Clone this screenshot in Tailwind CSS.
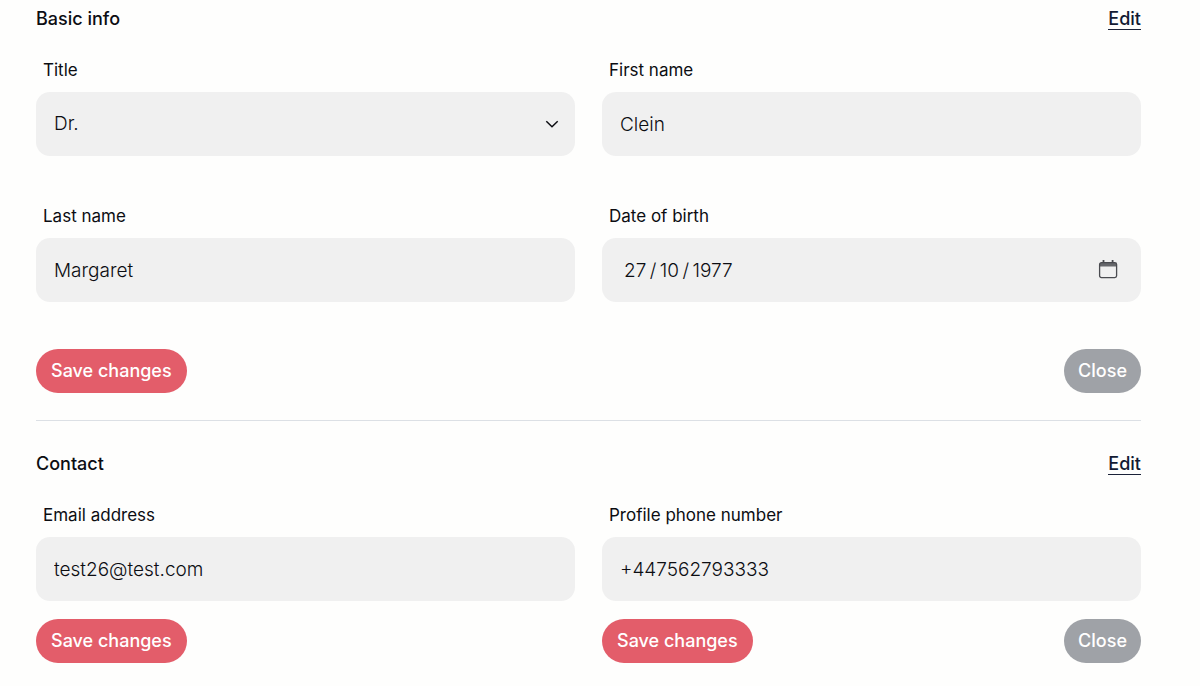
<!DOCTYPE html>
<html lang="en-GB">
<head>
<meta charset="utf-8">
<meta name="viewport" content="width=device-width, initial-scale=1">
<title>Profile</title>
<script src="https://cdn.jsdelivr.net/npm/@tailwindcss/browser@4"></script>
</head>
<body class="bg-[#fefefd] font-['Inter',sans-serif] text-[#0c0d12]">
<main class="pt-[5px] pb-5 pl-9 pr-[59px]">
  <section>
    <div class="flex items-center justify-between text-lg font-medium">
      <h2>Basic info</h2>
      <a href="#" class="border-b border-[#1b2238] leading-5 text-[#111a33]">Edit</a>
    </div>
    <form>
      <div class="mt-[25px] grid grid-cols-2 gap-x-[27px] gap-y-12">
        <div>
          <label for="title" class="block pl-[7px] text-[17px] leading-6">Title</label>
          <div class="relative mt-2.5">
            <select id="title" class="block h-16 w-full appearance-none rounded-[14px] bg-[#f0f0f0] px-[18px] text-[19px] font-light"><option>Dr.</option></select>
            <svg class="pointer-events-none absolute right-[16px] top-[25px] size-[14px]" viewBox="0 0 14 14" fill="none" stroke="currentColor" stroke-width="1.5"><path d="M1.3 4.2 7 9.8l5.7-5.6"/></svg>
          </div>
        </div>
        <div>
          <label for="first" class="block pl-[7px] text-[17px] leading-6">First name</label>
          <input id="first" type="text" value="Clein" class="mt-2.5 block h-16 w-full rounded-[14px] bg-[#f0f0f0] px-[18px] text-[19px] font-light">
        </div>
        <div>
          <label for="last" class="block pl-[7px] text-[17px] leading-6">Last name</label>
          <input id="last" type="text" value="Margaret" class="mt-2.5 block h-16 w-full rounded-[14px] bg-[#f0f0f0] px-[18px] text-[19px] font-light">
        </div>
        <div>
          <label for="dob" class="block pl-[7px] text-[17px] leading-6">Date of birth</label>
          <div class="relative mt-2.5">
            <input id="dob" type="text" value="27&#8201;/&#8201;10&#8201;/&#8201;1977" class="block h-16 w-full rounded-[14px] bg-[#f0f0f0] pl-[22px] pr-12 text-[19px] font-light">
            <button type="button" aria-label="Choose date" class="absolute right-[23px] top-[21px]">
              <svg class="block size-5" viewBox="0 0 20 20" fill="none"><path d="M2 4h16v3.5H2z" fill="#66676b"/><rect x="1.6" y="3.6" width="17" height="15" rx="1.8" stroke="#4a4b50" stroke-width="1.3"/><path d="M5.5 1v3M14.6 1v3" stroke="#4a4b50" stroke-width="1.8"/></svg>
            </button>
          </div>
        </div>
      </div>
      <div class="mt-[47px] flex justify-between text-lg font-medium text-white">
        <button type="submit" class="h-11 rounded-full bg-[#e35d6a] px-[15px]">Save changes</button>
        <button type="button" class="h-11 rounded-full bg-[#9fa2a7] px-[14px]">Close</button>
      </div>
    </form>
  </section>
  <hr class="mt-[27px] mb-[29px] border-[#dce0e5]">
  <section>
    <div class="flex items-center justify-between text-lg font-medium">
      <h2>Contact</h2>
      <a href="#" class="border-b border-[#1b2238] leading-5 text-[#111a33]">Edit</a>
    </div>
    <div class="mt-[25px] grid grid-cols-2 gap-x-[27px]">
      <form>
        <label for="email" class="block pl-[7px] text-[17px] leading-6">Email address</label>
        <input id="email" type="email" value="test26@test.com" class="mt-2.5 block h-16 w-full rounded-[14px] bg-[#f0f0f0] px-[18px] text-[19px] font-light">
        <div class="mt-[18px] flex text-lg font-medium text-white">
          <button type="submit" class="h-11 rounded-full bg-[#e35d6a] px-[15px]">Save changes</button>
        </div>
      </form>
      <form>
        <label for="phone" class="block pl-[7px] text-[17px] leading-6">Profile phone number</label>
        <input id="phone" type="tel" value="+447562793333" class="mt-2.5 block h-16 w-full rounded-[14px] bg-[#f0f0f0] px-[18px] text-[19px] font-light">
        <div class="mt-[18px] flex justify-between text-lg font-medium text-white">
          <button type="submit" class="h-11 rounded-full bg-[#e35d6a] px-[15px]">Save changes</button>
          <button type="button" class="h-11 rounded-full bg-[#9fa2a7] px-[14px]">Close</button>
        </div>
      </form>
    </div>
  </section>
</main>
</body>
</html>
